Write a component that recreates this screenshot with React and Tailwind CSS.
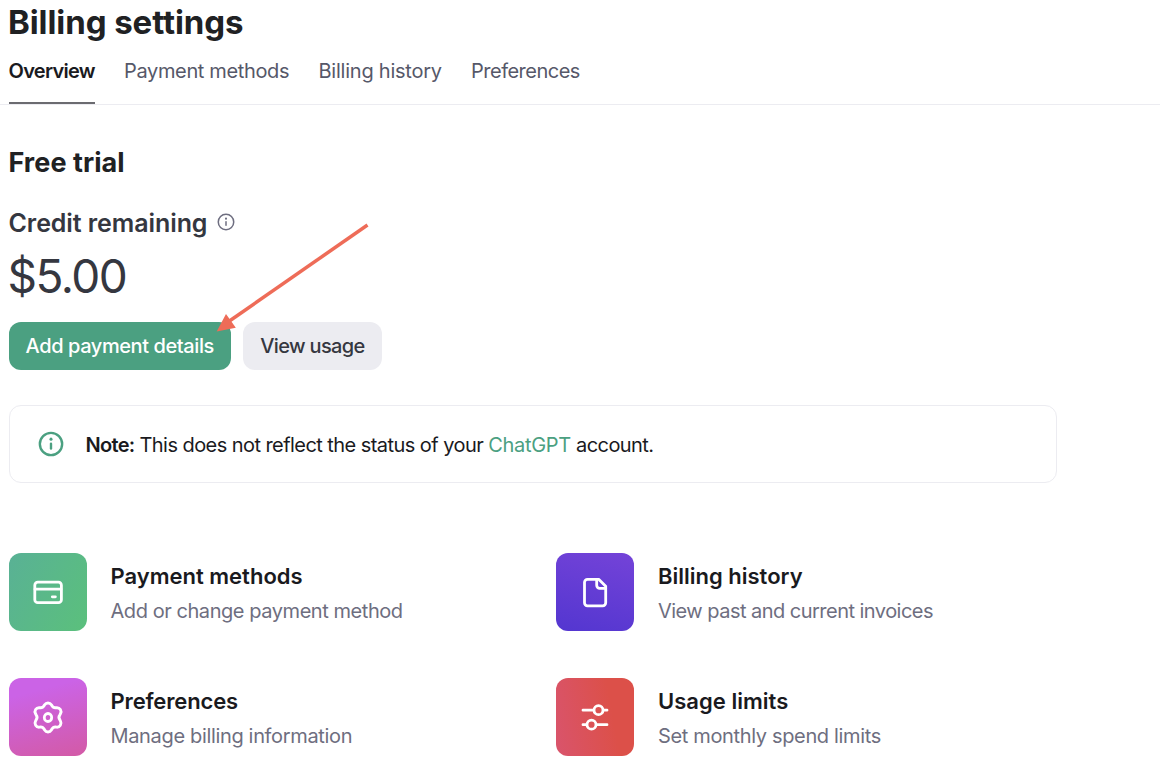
import React from "react";

const tabs = [
  { label: "Payment methods", cls: "w-[165px] tracking-[-0.35px]" },
  { label: "Billing history", cls: "w-[123px] tracking-[-0.23px]" },
  { label: "Preferences", cls: "w-[110px] tracking-[-0.5px]" },
];

function InfoIcon({ className, ring }) {
  return (
    <svg className={className} viewBox="0 0 24 24" fill="none" stroke="currentColor" strokeWidth={ring} strokeLinecap="round">
      <circle cx="12" cy="12" r="10.3" />
      <path d="M12 11.8v4.4" />
      <circle cx="12" cy="7.5" r="1.4" fill="currentColor" stroke="none" />
    </svg>
  );
}

function Tile({ className, children }) {
  return (
    <div className={`h-[78px] w-[78px] shrink-0 rounded-[12px] ${className}`}>
      <svg viewBox="0 0 78 78" className="h-full w-full" fill="none" stroke="white" strokeWidth="2.8" strokeLinecap="round" strokeLinejoin="round">
        {children}
      </svg>
    </div>
  );
}

function Card({ tile, icon, title, titleCls, text, textCls }) {
  return (
    <div className="flex gap-6">
      <Tile className={tile}>{icon}</Tile>
      <div className="pt-[6px] whitespace-nowrap">
        <div className={`text-[22px] leading-[35px] font-semibold text-[#1a1a1e] ${titleCls}`}>{title}</div>
        <div className={`text-[20px] leading-[34px] text-[#6e6e80] ${textCls}`}>{text}</div>
      </div>
    </div>
  );
}

export default function App() {
  return (
    <div className="relative h-[776px] w-[1160px] overflow-hidden bg-white font-['Inter','Liberation_Sans',sans-serif] text-[#202123]">
      <h1 className="h-[46px] pl-[8px] text-[33px] leading-[45px] font-bold whitespace-nowrap tracking-[-0.08px]">Billing settings</h1>
      <nav className="flex h-[59px] border-b border-[#ececf1] pl-[8.5px] text-[20px] leading-[50px] whitespace-nowrap">
        <div className="mr-[29.5px] h-[58px] w-[86px] border-b-2 border-[#6b6b70] font-semibold tracking-[-0.72px] text-[#1a1a1e]">Overview</div>
        <div className="flex gap-[29.5px] text-[#565869]">
          {tabs.map((t) => (
            <div key={t.label} className={t.cls}>{t.label}</div>
          ))}
        </div>
      </nav>
      <main className="pl-[8.5px]">
        <h2 className="mt-[38px] h-10 text-[27px] leading-10 font-bold tracking-[0.05px]">Free trial</h2>
        <div className="mt-[19px] flex h-10 items-center text-[25px] leading-10 font-semibold text-[#353740]">
          <span className="w-[208.5px] pt-px whitespace-nowrap tracking-[-0.08px]">Credit remaining</span>
          <InfoIcon className="h-[18px] w-[18px] text-[#6e6e80]" ring="2" />
        </div>
        <div className="-ml-px mt-[4px] h-[60px] text-[46px] leading-[60px] tracking-[-1.5px] text-[#353740]">$5.00</div>
        <div className="mt-[16px] flex gap-3 text-[20px] leading-[48px] font-medium whitespace-nowrap">
          <button className="h-12 w-[222.5px] rounded-[12px] bg-[#4ba081] text-center tracking-[-0.41px] text-white">Add payment details</button>
          <button className="h-12 w-[139px] rounded-[12px] bg-[#ececf1] text-center tracking-[-0.65px] text-[#353740]">View usage</button>
        </div>
        <div className="mt-[35px] flex h-[78px] w-[1048px] items-center rounded-[12px] border border-[#ececf1] pl-[28px] text-[20px] whitespace-nowrap text-[#1a1a1e]">
          <InfoIcon className="mr-[22px] h-[26px] w-[26px] text-[#4ba081]" ring="2.2" />
          <p className="pt-px tracking-[-0.56px]">
            <span className="font-semibold tracking-[-0.7px]">Note:</span> This does not reflect the status of your <span className="tracking-[-0.3px] text-[#4ba081]">ChatGPT</span> account.
          </p>
        </div>
        <div className="mt-[70px] grid grid-cols-[547.5px_1fr] gap-y-[47px]">
          <Card
            tile="bg-linear-[120deg,#59b195,#5bc07c]"
            title="Payment methods"
            titleCls="tracking-[0px]"
            text="Add or change payment method"
            textCls="tracking-[-0.44px]"
            icon={<><rect x="25.8" y="29.2" width="26.6" height="20.5" rx="3" /><path d="M26 36.2h26M43.3 43.8h3.1" /></>}
          />
          <Card
            tile="bg-linear-[195deg,#7443d8,#5336d0]"
            title="Billing history"
            titleCls="tracking-[0px]"
            text="View past and current invoices"
            textCls="tracking-[-0.53px]"
            icon={<><path d="M31.5 26.300h11.200l7 7v16.500a3 3 0 0 1-3 3H31.500a3 3 0 0 1-3-3V29.300a3 3 0 0 1 3-3z" /><path d="M40.700 26.300v6a3 3 0 0 0 3 3h6" /></>}
          />
          <Card
            tile="bg-linear-[165deg,#cb63e6_20%,#d35aa5]"
            title="Preferences"
            titleCls="tracking-[-0.15px]"
            text="Manage billing information"
            textCls="tracking-[-0.34px]"
            icon={
              <>
                <path transform="translate(39 39.5) scale(1.05 1.07) translate(-39 -39.1)" d="M35.800 27.200a3.800 3.800 0 0 1 6.400 0l.5.8a3.800 3.800 0 0 0 3.400 2l1.300-.1a3.800 3.800 0 0 1 3.500 5.600l-.6 1.200a3.800 3.800 0 0 0 0 4.600l.6 1.200a3.800 3.800 0 0 1-3.500 5.600l-1.300-.1a3.800 3.800 0 0 0-3.400 2l-.5.8a3.800 3.800 0 0 1-6.400 0l-.5-.8a3.800 3.800 0 0 0-3.400-2l-1.300.1a3.800 3.800 0 0 1-3.500-5.600l.6-1.200a3.800 3.800 0 0 0 0-4.600l-.6-1.200a3.800 3.800 0 0 1 3.500-5.600l1.300.1a3.800 3.800 0 0 0 3.400-2z" />
                <ellipse cx="39" cy="39.500" rx="3.700" ry="4" />
              </>
            }
          />
          <Card
            tile="bg-linear-[80deg,#d9546c,#dc5049_70%]"
            title="Usage limits"
            titleCls="tracking-[0.03px]"
            text="Set monthly spend limits"
            textCls="tracking-[-0.35px]"
            icon={<><path d="M27 32.200h10.500M47.500 32.200h3.500M27 46.700h3.500M40.500 46.700h10.500" /><circle cx="42.500" cy="32.200" r="4.500" /><circle cx="35.500" cy="46.700" r="4.500" /></>}
          />
        </div>
      </main>
      <svg className="pointer-events-none absolute top-[220px] left-[212px] h-[116px] w-[160px]" viewBox="212 220 160 116">
        <path d="M367.5 225 228 322" stroke="#ee6c58" strokeWidth="3.5" />
        <path d="M216.7 331.5 226 314l9.8 13.8z" fill="#ee6c58" />
      </svg>
    </div>
  );
}
